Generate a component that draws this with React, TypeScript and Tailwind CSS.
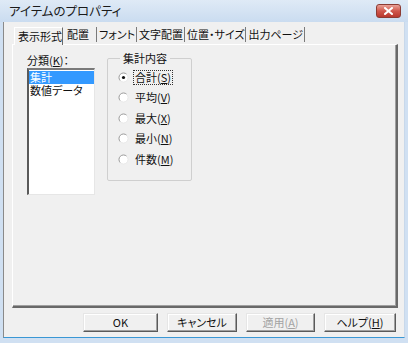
import React from "react";

const font = "font-['MS_UI_Gothic','Noto_Sans_CJK_JP',sans-serif] [font-feature-settings:'palt']";

const tabs = ["配置", "フォント", "文字配置", "位置・サイズ", "出力ページ"];

const radios = [
    { label: "合計", key: "S", checked: true },
    { label: "平均", key: "V" },
    { label: "最大", key: "X" },
    { label: "最小", key: "N" },
    { label: "件数", key: "M" },
];

function Radio({ checked }: { checked?: boolean }) {
    return (
        <svg width="11" height="11" viewBox="0 0 11 11" className="shrink-0">
            <circle cx="5.5" cy="5.5" r="4.5" fill="#ffffff" />
            <path d="M8.7 2.3 A4.5 4.5 0 0 0 2.3 8.7" fill="none" stroke="#9a9a9a" strokeWidth="1" />
            <path d="M2.3 8.7 A4.5 4.5 0 0 0 8.7 2.3" fill="none" stroke="#e8e8e8" strokeWidth="1" />
            {checked && <circle cx="5.5" cy="5.5" r="1.6" fill="#111111" />}
        </svg>
    );
}

function Button({ children, w, disabled }: { children: React.ReactNode; w: string; disabled?: boolean }) {
    return (
        <div
            className={`${w} h-[19px] flex items-center justify-center bg-[#f0f0f0] border border-t-[#e6e6e6] border-l-[#e6e6e6] border-r-[#5a5a5a] border-b-[#5a5a5a] shadow-[inset_-1px_-1px_0_#a0a0a0,inset_1px_1px_0_#ffffff] text-[11px] leading-none ${disabled ? "text-[#a3a3a3]" : "text-[#111]"}`}
        >
            {children}
        </div>
    );
}

export default function App() {
    return (
        <div className={`w-[408px] h-[343px] flex flex-col bg-[#d0e0f2] ${font} text-[#111]`}>
            {/* Title bar */}
            <div className="h-[22px] flex items-center justify-between pl-[9px] pr-[7px] bg-gradient-to-b from-[#dfeaf6] to-[#cadcf0]">
                <span className="text-[12.5px] leading-none text-[#1a1a1a]">アイテムのプロパティ</span>
                <div className="w-[25px] h-[14px] rounded-[3px] border border-[#8c3b33] bg-gradient-to-b from-[#e8a198] via-[#d0574c] to-[#b9382e] flex items-center justify-center">
                    <svg width="9" height="8" viewBox="0 0 9 8">
                        <path d="M1 1 L8 7 M8 1 L1 7" stroke="#ffffff" strokeWidth="2" strokeLinecap="square" />
                    </svg>
                </div>
            </div>

            {/* Body */}
            <div className="flex-1 mx-[3px] mb-[5px] bg-[#f0f0f0] border-l border-r border-b border-l-[#8a8a8a] border-r-[#c8d8ea] border-b-[#3a97d4] flex flex-col pl-[8px] pr-[6px] pt-[5px]">
                {/* Tabs */}
                <div className="flex items-end h-[17px] pl-[2px] text-[11px] leading-none">
                    <div className="w-[49px] h-[18px] -mb-[1px] relative z-10 bg-[#f0f0f0] border-t border-l border-r border-t-white border-l-white border-r-[#6b6b6b] flex items-center pl-[3px] whitespace-nowrap">
                        表示形式
                    </div>
                    {tabs.map((t, i) => (
                        <div
                            key={t}
                            className={`h-[15px] mb-[2px] border-r border-r-[#7a7a7a] flex items-center whitespace-nowrap ${i === 0 ? "pl-[4px] pr-[7px]" : "pl-[2px] pr-[1px]"}`}
                        >
                            {t}
                        </div>
                    ))}
                </div>

                {/* Tab panel */}
                <div className="w-[386px] h-[264px] border-t border-l border-t-white border-l-white border-r-2 border-b-2 border-r-[#696969] border-b-[#696969] shadow-[inset_-1px_-1px_0_#a0a0a0] flex gap-[12px] pl-[14px] pt-[8px] text-[11px] leading-none">
                    {/* Category list */}
                    <div className="flex flex-col">
                        <div className="h-[14px] flex items-center whitespace-nowrap">
                            分類(<span className="underline">K</span>)：
                        </div>
                        <div className="w-[68px] h-[127px] bg-white border-t-2 border-l-2 border-t-[#7a7a7a] border-l-[#5a5a5a] border-r border-b border-r-[#e6e6e6] border-b-[#e6e6e6] pt-[1px] mt-[1px]">
                            <div className="h-[13px] leading-[13px] bg-[#3399ff] text-white pl-[1px]">集計</div>
                            <div className="h-[13px] leading-[13px] pl-[1px]">数値データ</div>
                        </div>
                    </div>

                    {/* Aggregation group */}
                    <fieldset className="w-[85px] h-[128px] border border-[#cfcfcf] rounded-[2px] pl-[10px]">
                        <legend className="px-[3px] ml-[2px] leading-none">集計内容</legend>
                        <div className="flex flex-col gap-[6.5px] pt-[6px]">
                            {radios.map((r) => (
                                <div key={r.key} className="h-[14px] flex items-center gap-[4px] whitespace-nowrap">
                                    <Radio checked={r.checked} />
                                    <span
                                        className={`px-[1px] py-[1px] border border-dotted ${r.checked ? "border-[#333]" : "border-transparent"}`}
                                    >
                                        {r.label}(<span className="underline">{r.key}</span>)
                                    </span>
                                </div>
                            ))}
                        </div>
                    </fieldset>
                </div>

                {/* Dialog buttons */}
                <div className="flex justify-end gap-[9px] pr-[2px] mt-[5px]">
                    <Button w="w-[75px]">OK</Button>
                    <Button w="w-[70px]">キャンセル</Button>
                    <Button w="w-[69px]" disabled>
                        適用(<span className="underline">A</span>)
                    </Button>
                    <Button w="w-[72px]">
                        ヘルプ(<span className="underline">H</span>)
                    </Button>
                </div>
            </div>
        </div>
    );
}
